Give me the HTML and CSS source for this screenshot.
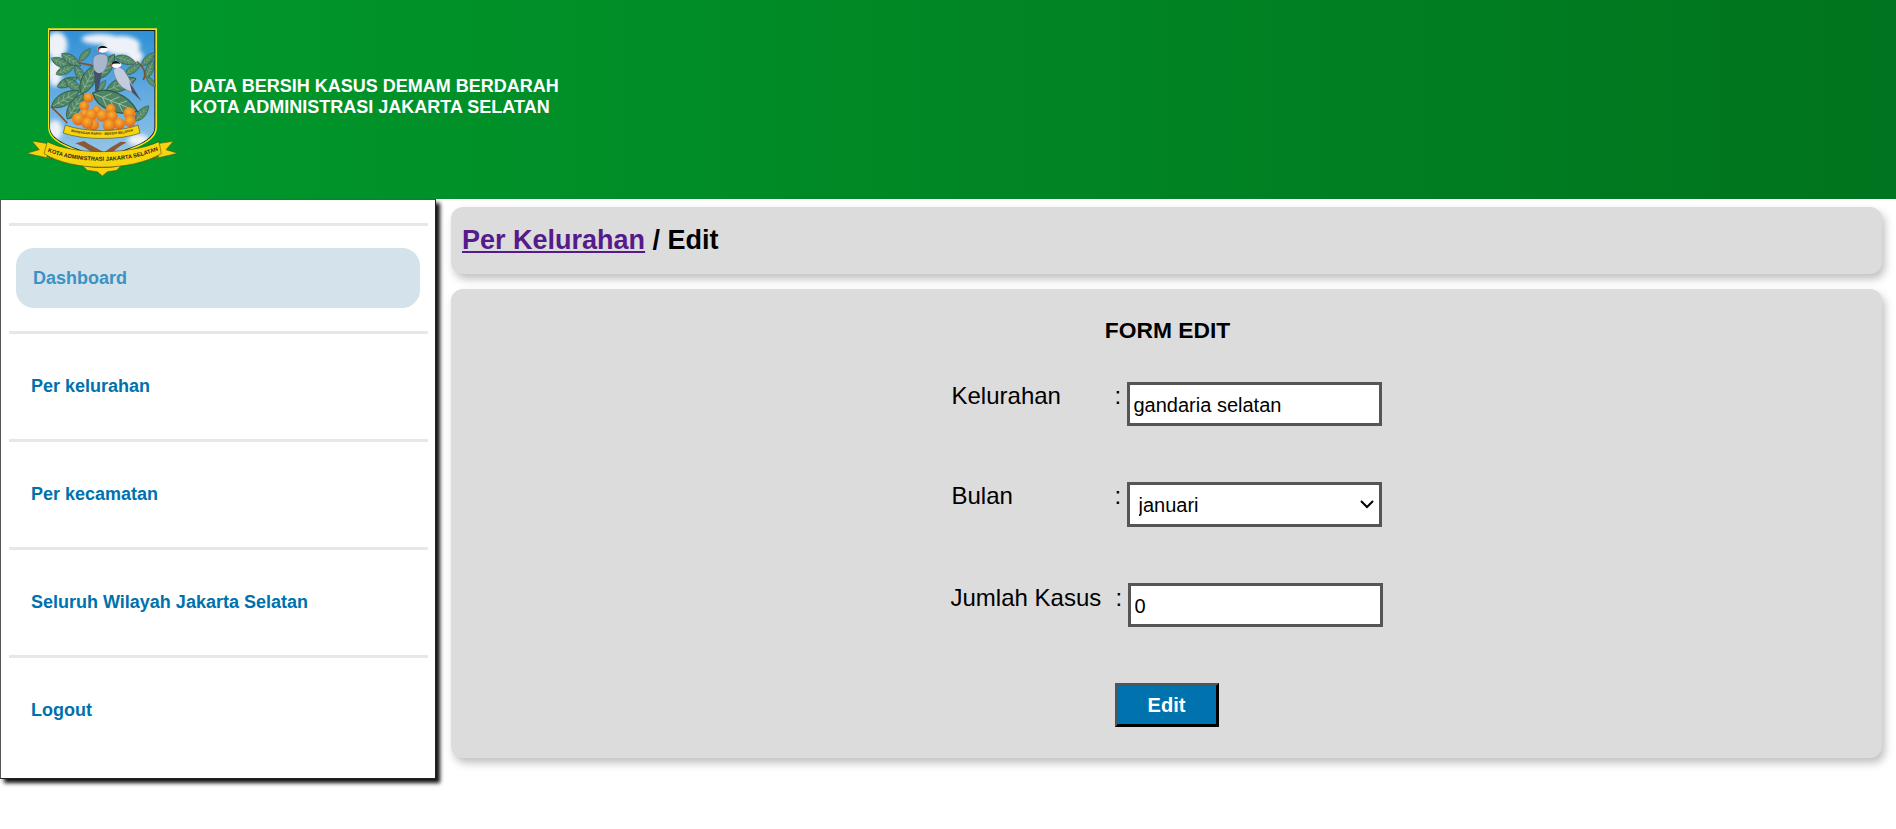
FILE: index.html
```html
<!DOCTYPE html>
<html lang="id">
<head>
    <meta charset="UTF-8">
    <meta name="viewport" content="width=device-width, initial-scale=1.0">
    <title>Data Bersih Kasus Demam Berdarah</title>
    <link rel="stylesheet" href="styles.css">
</head>
<body>
    <header class="header">
        <svg class="logo" viewBox="0 0 540 510" width="180" height="170" role="img" aria-label="Lambang Kota Administrasi Jakarta Selatan">
            <defs>
                <linearGradient id="sky" x1="0" y1="0" x2="0" y2="1">
                    <stop offset="0" stop-color="#2f8fd6"/>
                    <stop offset="1" stop-color="#9cc9ea"/>
                </linearGradient>
                <radialGradient id="fruit" cx="0.45" cy="0.35" r="0.7">
                    <stop offset="0" stop-color="#f7b52e"/>
                    <stop offset="1" stop-color="#e05e1a"/>
                </radialGradient>
                <filter id="soft"><feGaussianBlur stdDeviation="7"/></filter>
                <clipPath id="shieldClip">
                    <path d="M120 47H434V335C434 385 340 400 277 432C214 400 120 385 120 335Z"/>
                </clipPath>
                <g id="leaf">
                    <path d="M0 0C20 -26 70 -26 100 0C70 26 20 26 0 0Z" fill="#4f8464" stroke="#2b5a40" stroke-width="2.5"/>
                    <path d="M4 0H94M22 0L36 -14M40 0L54 -14M58 0L72 -12M22 0L36 14M40 0L54 14M58 0L72 12" fill="none" stroke="#a9c7b0" stroke-width="1.6"/>
                </g>
            </defs>

            <path d="M114 40H441V337C441 392 345 405 277 440C209 405 114 392 114 337Z" fill="#f6e11a"/>
            <path d="M118 45H436V336C436 388 341 402 277 435C213 402 118 388 118 336Z" fill="#111"/>
            <g clip-path="url(#shieldClip)">
                <rect x="118" y="45" width="320" height="400" fill="url(#sky)"/>
                <g fill="#eef2f8" filter="url(#soft)">
                    <ellipse cx="140" cy="90" rx="32" ry="40"/>
                    <ellipse cx="135" cy="170" rx="22" ry="45"/>
                    <ellipse cx="270" cy="72" rx="55" ry="16"/>
                    <ellipse cx="335" cy="92" rx="55" ry="30"/>
                    <ellipse cx="375" cy="125" rx="24" ry="22"/>
                    <ellipse cx="135" cy="345" rx="22" ry="30"/>
                    <ellipse cx="385" cy="375" rx="32" ry="18"/>
                </g>
                <path d="M196 385C222 395 244 408 262 428L296 428C308 408 326 395 350 382L332 380C312 392 296 400 282 412C262 400 240 390 222 378Z" fill="#8a5a36"/>
                <path d="M205 143C232 148 252 153 280 160M380 140C400 155 410 175 400 195M123 275C140 290 155 305 172 325M322 290L336 278" fill="none" stroke="#8a4f2c" stroke-width="5"/>
            </g>

            <!-- daun belakang -->
            <use href="#leaf" transform="translate(124 130) rotate(25) scale(.66)"/>
            <use href="#leaf" transform="translate(155 116) rotate(33) scale(.68)"/>
            <use href="#leaf" transform="translate(208 138) rotate(-48) scale(.5)"/>
            <use href="#leaf" transform="translate(138 178) rotate(-25) scale(.62)"/>
            <use href="#leaf" transform="translate(196 152) rotate(62) scale(.62)"/>
            <use href="#leaf" transform="translate(142 216) rotate(-25) scale(.66)"/>
            <use href="#leaf" transform="translate(165 190) rotate(40) scale(.66)"/>
            <use href="#leaf" transform="translate(214 236) rotate(-63) scale(1)"/>
            <use href="#leaf" transform="translate(316 125) rotate(18) scale(.66)"/>
            <use href="#leaf" transform="translate(345 178) rotate(-33) scale(.55)"/>
            <use href="#leaf" transform="translate(395 152) rotate(-45) scale(.56)"/>
            <use href="#leaf" transform="translate(408 190) rotate(-68) scale(.58)"/>
            <use href="#leaf" transform="translate(410 186) rotate(48) scale(.4)"/>
            <use href="#leaf" transform="translate(268 190) rotate(-58) scale(.85)"/>
            <use href="#leaf" transform="translate(262 232) rotate(-55) scale(.44)"/>
            <use href="#leaf" transform="translate(290 226) rotate(-22) scale(.95)"/>

            <!-- burung kiri -->
            <path d="M250 130C254 114 286 112 293 126C296 148 284 172 270 178L262 232L256 232L258 176C250 165 247 145 250 130Z" fill="#a9b6cc" stroke="#5d6b85" stroke-width="1.5"/>
            <path d="M252 165C262 176 270 176 276 172L264 232L256 232Z" fill="#45506a"/>
            <ellipse cx="278" cy="102" rx="16" ry="11" fill="#fff"/>
            <path d="M263 103C264 90 286 88 293 100C282 98 272 98 263 103Z" fill="#111"/>
            <path d="M263 100L270 103L264 110Z" fill="#d3362a"/>
            <!-- burung kanan -->
            <path d="M310 165C320 152 338 156 346 172C358 190 368 210 372 224L392 256L364 230C340 224 316 205 310 165Z" fill="#c4cbdc" stroke="#5d6b85" stroke-width="1.5"/>
            <path d="M358 200C368 214 380 236 392 256L366 232Z" fill="#45506a"/>
            <ellipse cx="319" cy="149" rx="15" ry="10" fill="#fff"/>
            <path d="M304 148C306 136 326 134 332 147C322 145 312 145 304 148Z" fill="#111"/>
            <path d="M300 147L309 147L305 154Z" fill="#d3362a"/>

            <!-- daun depan -->
            <use href="#leaf" transform="translate(125 275) rotate(-30) scale(.95)"/>
            <use href="#leaf" transform="translate(172 312) rotate(-58) scale(.9)"/>
            <use href="#leaf" transform="translate(248 235) rotate(22) scale(1.45)"/>
            <use href="#leaf" transform="translate(375 318) rotate(-48) scale(.62)"/>

            <g fill="url(#fruit)">
                <circle cx="235" cy="248" r="15"/>
                <circle cx="222" cy="274" r="15"/>
                <circle cx="302" cy="282" r="15"/>
                <circle cx="260" cy="285" r="13"/>
                <circle cx="224" cy="296" r="14"/>
                <circle cx="205" cy="312" r="19"/>
                <circle cx="243" cy="300" r="18"/>
                <circle cx="276" cy="302" r="18"/>
                <circle cx="306" cy="304" r="17"/>
                <circle cx="358" cy="295" r="18"/>
                <circle cx="360" cy="319" r="17"/>
                <circle cx="328" cy="326" r="17"/>
                <circle cx="250" cy="330" r="17"/>
                <circle cx="297" cy="331" r="19"/>
                <circle cx="232" cy="324" r="18"/>
            </g>

            <path d="M166 330C215 352 335 352 384 330L390 354C335 376 220 376 160 354Z" fill="#f6d50f" stroke="#3a3210" stroke-width="1.5"/>
            <path id="smallText" d="M172 347C220 364 330 364 380 345" fill="none"/>
            <text class="logo-small"><textPath href="#smallText" startOffset="50%" text-anchor="middle">BARENGAN RAPIH - BERSIH SELATAN</textPath></text>

            <path d="M66 378L126 388L110 425L128 432L50 415L88 404Z" fill="#f6d50f" stroke="#5b4a0a" stroke-width="1.5"/>
            <path d="M490 379L430 388L446 425L428 432L503 415L468 404Z" fill="#f6d50f" stroke="#5b4a0a" stroke-width="1.5"/>
            <path d="M215 450C240 460 315 460 335 450L320 466L292 470L277 483L262 470L232 466Z" fill="#f6d50f" stroke="#5b4a0a" stroke-width="1.5"/>
            <path d="M112 380C190 420 360 420 447 380L454 416C360 470 190 470 102 416Z" fill="#f6d50f" stroke="#3a3210" stroke-width="1.5"/>
            <path id="mainText" d="M110 408C200 448 350 448 448 404" fill="none"/>
            <text class="logo-main"><textPath href="#mainText" startOffset="50%" text-anchor="middle">KOTA ADMINISTRASI JAKARTA SELATAN</textPath></text>
        </svg>
        <h1 class="site-title">DATA BERSIH KASUS DEMAM BERDARAH<br>KOTA ADMINISTRASI JAKARTA SELATAN</h1>
    </header>

    <div class="main">
        <nav class="sidebar">
            <div class="nav-item"><a class="nav-link active" href="#">Dashboard</a></div>
            <div class="nav-item"><a class="nav-link" href="#">Per kelurahan</a></div>
            <div class="nav-item"><a class="nav-link" href="#">Per kecamatan</a></div>
            <div class="nav-item"><a class="nav-link" href="#">Seluruh Wilayah Jakarta Selatan</a></div>
            <div class="nav-item"><a class="nav-link" href="#">Logout</a></div>
        </nav>

        <div class="content">
            <div class="panel breadcrumb">
                <a class="crumb-link" href="#">Per Kelurahan</a>&nbsp;/ Edit
            </div>

            <form class="panel form-panel">
                <h2 class="form-title">FORM EDIT</h2>
                <div class="field">
                    <label class="field-label" for="kelurahan">Kelurahan</label>
                    <span class="field-colon">:</span>
                    <input class="field-input" type="text" id="kelurahan" value="gandaria selatan">
                </div>
                <div class="field">
                    <label class="field-label" for="bulan">Bulan</label>
                    <span class="field-colon">:</span>
                    <select class="field-input field-select" id="bulan">
                        <option>januari</option>
                        <option>februari</option>
                        <option>maret</option>
                    </select>
                </div>
                <div class="field field-kasus">
                    <label class="field-label" for="kasus">Jumlah Kasus</label>
                    <span class="field-colon">:</span>
                    <input class="field-input" type="text" id="kasus" value="0">
                </div>
                <button class="btn-edit" type="button">Edit</button>
            </form>
        </div>
    </div>
</body>
</html>
```

FILE: styles.css
```css
* {
    box-sizing: border-box;
}
body {
    margin: 0;
    font-family: "Liberation Sans", Arial, sans-serif;
    background-color: #fff;
    color: #000;
}

.header {
    height: 199px;
    display: flex;
    align-items: flex-start;
    padding: 15px 0 0 10px;
    background: linear-gradient(to right, #009a2c, #00741e);
}
.logo {
    flex: none;
}
.logo-main {
    font: bold 17px "Liberation Sans", Arial, sans-serif;
    fill: #2a2408;
}
.logo-small {
    font: bold 10px "Liberation Sans", Arial, sans-serif;
    fill: #3a3210;
}
.site-title {
    margin: 61px 0 0;
    font-size: 18px;
    line-height: 21px;
    font-weight: bold;
    color: #fff;
}

.main {
    display: flex;
    align-items: flex-start;
    padding-bottom: 30px;
}
.sidebar {
    width: 436px;
    height: 580px;
    flex: none;
    padding: 23px 7px 0 8px;
    background: #fff;
    border: 1px solid #555;
    border-right-color: #222;
    border-bottom-color: #222;
    box-shadow: 4px 4px 4px #111;
}
.nav-item {
    height: 108px;
    padding: 22px 8px 0 7px;
    border-top: 3px solid #e7e7e7;
}
.nav-link {
    display: flex;
    align-items: center;
    height: 60px;
    padding-left: 15px;
    border-radius: 18px;
    font-size: 18px;
    font-weight: bold;
    text-decoration: none;
    color: #0071ad;
}
.nav-link.active {
    padding-left: 17px;
    background: #d3e2eb;
    color: #3c92c2;
}

.content {
    flex: 1;
    display: flex;
    flex-direction: column;
    gap: 15px;
    padding: 8px 14px 0 15px;
}
.panel {
    background: #dcdcdc;
    border-radius: 12px;
    box-shadow: 3px 5px 8px rgba(0, 0, 0, 0.25);
}
.breadcrumb {
    height: 67px;
    display: flex;
    align-items: center;
    padding-left: 11px;
    font-size: 27px;
    font-weight: bold;
}
.crumb-link {
    color: #551a8b;
}

.form-panel {
    height: 469px;
    display: flex;
    flex-direction: column;
    align-items: center;
    padding-top: 29px;
}
.form-title {
    margin: 0 0 39px;
    padding-left: 2px;
    font-size: 22.8px;
    line-height: 25px;
    font-weight: bold;
}
.field {
    display: flex;
    align-items: flex-start;
    width: 430px;
    margin-bottom: 56px;
}
.field-label {
    flex: none;
    width: 163px;
    font-size: 24px;
    line-height: 27px;
}
.field-colon {
    flex: none;
    width: 12px;
    font-size: 24px;
    line-height: 27px;
}
.field-input {
    flex: none;
    width: 255px;
    height: 44px;
    padding: 2px 2px 0 4px;
    background: #fff;
    border: 3px solid #555;
    border-radius: 0;
    outline: none;
    font-family: inherit;
    font-size: 20px;
    color: #000;
}
.field-select {
    height: 45px;
    padding: 0 0 0 9px;
    appearance: none;
    background: #fff url("data:image/svg+xml,%3Csvg xmlns='http://www.w3.org/2000/svg' width='14' height='9'%3E%3Cpath d='M1 1l6 6 6-6' fill='none' stroke='%23000' stroke-width='2'/%3E%3C/svg%3E") no-repeat right 5px center;
}
.field-kasus .field-label {
    margin: 1px 1px 0 -1px;
}
.field-kasus .field-colon {
    margin: 1px 0 0 1px;
}
.btn-edit {
    width: 104px;
    height: 44px;
    padding: 0;
    background: #0072ae;
    border-style: solid;
    border-width: 3px;
    border-color: #555 #000 #000 #555;
    font-family: inherit;
    font-size: 20px;
    font-weight: bold;
    color: #fff;
    cursor: pointer;
}
```
